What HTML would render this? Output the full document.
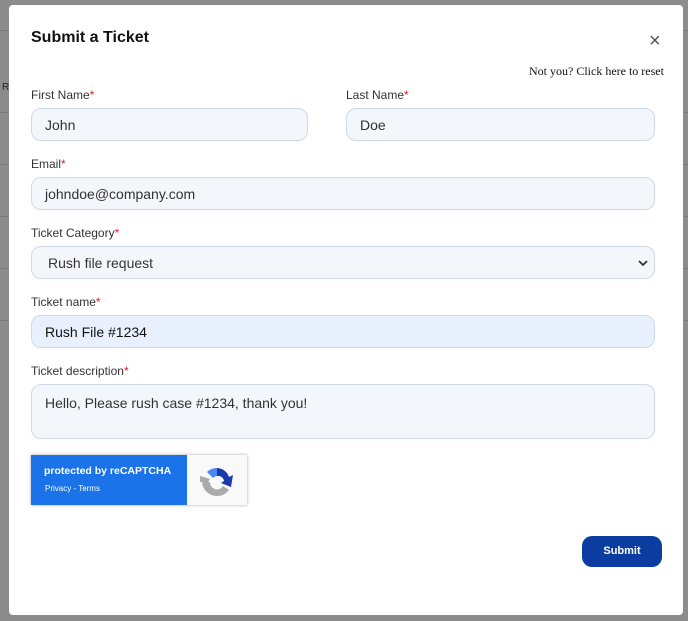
<!DOCTYPE html><html><head><style>
body{margin:0;width:688px;height:621px;background:#8c8c8c;position:relative;overflow:hidden;font-family:"Liberation Sans",sans-serif}
.bgl{position:absolute;left:0;width:688px;height:1px;background:#7a7a7a}
.m{position:absolute;left:9px;top:5px;width:674px;height:610px;background:#fff;border-radius:4px}
.a{position:absolute}
h1{position:absolute;left:31px;top:29px;margin:0;font-size:16px;font-weight:bold;color:#111}
.lb{position:absolute;font-size:12px;color:#333}
.lb i{color:#e02020;font-style:normal}
.in{position:absolute;box-sizing:border-box;height:33px;background:#f3f6fa;border:1px solid #cfd9e6;border-radius:10px;font-size:14px;color:#333;padding:0 13px;line-height:33px}
</style></head><body>
<div class="bgl" style="top:30px"></div><div class="bgl" style="top:112px"></div><div class="bgl" style="top:164px"></div><div class="bgl" style="top:216px"></div><div class="bgl" style="top:268px"></div><div class="bgl" style="top:320px"></div>
<div class="a" style="left:2px;top:82px;font-size:10px;color:#222">R</div>
<div class="m"></div>
<h1>Submit a Ticket</h1>
<div class="a" style="left:649px;top:30px;font-size:20px;color:#555">×</div>
<div class="a" style="left:529px;top:64px;font-family:'Liberation Serif',serif;font-size:12px;color:#111">Not you? Click here to reset</div>
<div class="lb" style="left:31px;top:88px">First Name<i>*</i></div>
<div class="lb" style="left:346px;top:88px">Last Name<i>*</i></div>
<div class="in" style="left:31px;top:108px;width:277px">John</div>
<div class="in" style="left:346px;top:108px;width:309px">Doe</div>
<div class="lb" style="left:31px;top:157px">Email<i>*</i></div>
<div class="in" style="left:31px;top:177px;width:624px">johndoe@company.com</div>
<div class="lb" style="left:31px;top:226px">Ticket Category<i>*</i></div>
<div class="in" style="left:31px;top:246px;width:624px;padding-left:16px">Rush file request<svg style="position:absolute;right:6px;top:12px" width="10" height="8" viewBox="0 0 10 8"><path d="M1 2l4 4 4-4" stroke="#333" stroke-width="1.8" fill="none"/></svg></div>
<div class="lb" style="left:31px;top:295px">Ticket name<i>*</i></div>
<div class="in" style="left:31px;top:315px;width:624px;background:#e8f0fe;color:#111">Rush File #1234</div>
<div class="lb" style="left:31px;top:364px">Ticket description<i>*</i></div>
<div class="in" style="left:31px;top:384px;width:624px;height:55px;line-height:20px;padding-top:8px">Hello, Please rush case #1234, thank you!</div>
<div class="a" style="left:31px;top:455px;width:216px;height:50px;background:#f9f9f9;box-shadow:0 0 3px rgba(0,0,0,.35)">
<div class="a" style="left:0;top:0;width:156px;height:50px;background:#1a73e8;color:#fff">
<div class="a" style="left:13px;top:10px;font-size:10.5px;font-weight:bold">protected by reCAPTCHA</div>
<div class="a" style="left:14px;top:29px;font-size:8px">Privacy - Terms</div></div>
<svg class="a" style="left:168px;top:7px" width="36" height="36" viewBox="0 0 36 36"><path d="M8 10a14 14 0 0 1 10-4v8a6 6 0 0 0-4 2z" fill="#4a8af4"/><path d="M18 6a13 13 0 0 1 12 9l4-2-2 12-10-4 3-2a6 6 0 0 0-7-5z" fill="#1c3aa9"/><path d="M3 20h8a7 7 0 0 0 13 4l6 4A15 15 0 0 1 3 20z" fill="#ababab"/><path d="M1 14l10 3-2 3H1z" fill="#ababab"/></svg>
</div>
<div class="a" style="left:582px;top:536px;width:80px;height:31px;background:#0a3d9f;border-radius:10px;color:#fff;font-size:11px;font-weight:bold;text-align:center;line-height:31px">Submit</div>
</body></html>
